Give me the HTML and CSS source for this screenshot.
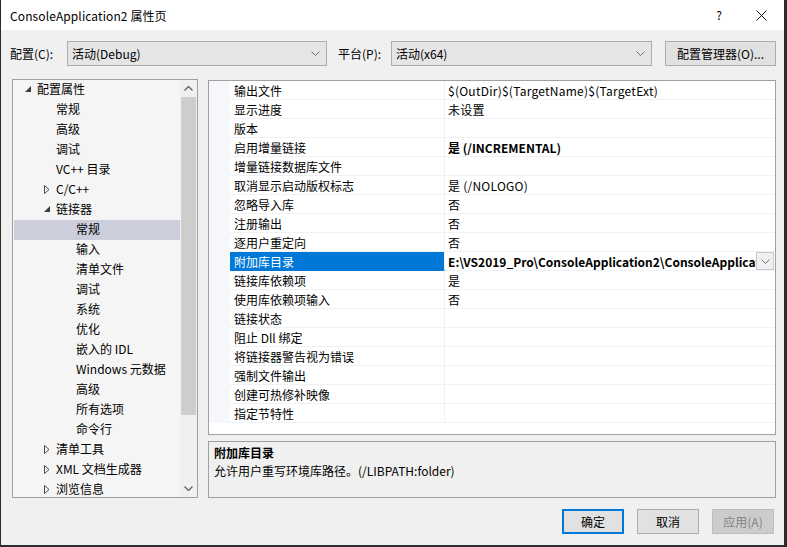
FILE: index.html
```html
<!DOCTYPE html>
<html lang="zh-CN">
<head>
<meta charset="utf-8">
<title>ConsoleApplication2 属性页</title>
<link rel="stylesheet" href="styles.css">
</head>
<body>
<div class="window">
  <div class="titlebar">
    <span class="title">ConsoleApplication2 属性页</span>
    <span class="help">?</span>
    <span class="close"><svg width="11" height="11" viewBox="0 0 11 11"><path d="M0.5 0.5L10.5 10.5M10.5 0.5L0.5 10.5" stroke="#111" stroke-width="1" fill="none"/></svg></span>
  </div>

  <div class="config">
    <span class="lbl">配置(C):</span>
    <div class="combo combo-cfg"><span>活动(Debug)</span><svg class="chev" width="9" height="5" viewBox="0 0 9 5"><path d="M0.5 0.5L4.5 4.5L8.5 0.5" stroke="#6d6d6d" fill="none"/></svg></div>
    <span class="lbl lbl-plat">平台(P):</span>
    <div class="combo combo-plat"><span>活动(x64)</span><svg class="chev" width="9" height="5" viewBox="0 0 9 5"><path d="M0.5 0.5L4.5 4.5L8.5 0.5" stroke="#6d6d6d" fill="none"/></svg></div>
    <button class="btn btn-mgr">配置管理器(O)...</button>
  </div>

  <div class="main">
    <div class="tree">
      <div class="nodes">
        <div class="node l0"><span class="tw"><svg width="6" height="6" viewBox="0 0 6 6"><polygon points="6,0 6,6 0,6" fill="#3c3c3c"/></svg></span>配置属性</div>
        <div class="node l1"><span class="tw"></span>常规</div>
        <div class="node l1"><span class="tw"></span>高级</div>
        <div class="node l1"><span class="tw"></span>调试</div>
        <div class="node l1"><span class="tw"></span>VC++ 目录</div>
        <div class="node l1"><span class="tw"><svg width="6" height="9" viewBox="0 0 6 9"><polygon points="0.5,0.5 5,4.5 0.5,8.5" fill="none" stroke="#4a4a4a"/></svg></span>C/C++</div>
        <div class="node l1"><span class="tw"><svg width="6" height="6" viewBox="0 0 6 6"><polygon points="6,0 6,6 0,6" fill="#3c3c3c"/></svg></span>链接器</div>
        <div class="node l2 sel"><span class="tw"></span>常规</div>
        <div class="node l2"><span class="tw"></span>输入</div>
        <div class="node l2"><span class="tw"></span>清单文件</div>
        <div class="node l2"><span class="tw"></span>调试</div>
        <div class="node l2"><span class="tw"></span>系统</div>
        <div class="node l2"><span class="tw"></span>优化</div>
        <div class="node l2"><span class="tw"></span>嵌入的 IDL</div>
        <div class="node l2"><span class="tw"></span>Windows 元数据</div>
        <div class="node l2"><span class="tw"></span>高级</div>
        <div class="node l2"><span class="tw"></span>所有选项</div>
        <div class="node l2"><span class="tw"></span>命令行</div>
        <div class="node l1"><span class="tw"><svg width="6" height="9" viewBox="0 0 6 9"><polygon points="0.5,0.5 5,4.5 0.5,8.5" fill="none" stroke="#4a4a4a"/></svg></span>清单工具</div>
        <div class="node l1"><span class="tw"><svg width="6" height="9" viewBox="0 0 6 9"><polygon points="0.5,0.5 5,4.5 0.5,8.5" fill="none" stroke="#4a4a4a"/></svg></span>XML 文档生成器</div>
        <div class="node l1"><span class="tw"><svg width="6" height="9" viewBox="0 0 6 9"><polygon points="0.5,0.5 5,4.5 0.5,8.5" fill="none" stroke="#4a4a4a"/></svg></span>浏览信息</div>
      </div>
      <div class="scrollbar">
        <div class="sb-arrow"><svg width="9" height="5" viewBox="0 0 9 5"><path d="M0.5 4.5L4.5 0.5L8.5 4.5" stroke="#606060" stroke-width="1.3" fill="none"/></svg></div>
        <div class="sb-thumb"></div>
        <div class="sb-track"></div>
        <div class="sb-arrow"><svg width="9" height="5" viewBox="0 0 9 5"><path d="M0.5 0.5L4.5 4.5L8.5 0.5" stroke="#606060" stroke-width="1.3" fill="none"/></svg></div>
      </div>
    </div>

    <div class="right">
      <div class="grid">
        <div class="row"><span class="gut"></span><span class="name">输出文件</span><span class="val">$(OutDir)$(TargetName)$(TargetExt)</span></div>
        <div class="row"><span class="gut"></span><span class="name">显示进度</span><span class="val">未设置</span></div>
        <div class="row"><span class="gut"></span><span class="name">版本</span><span class="val"></span></div>
        <div class="row"><span class="gut"></span><span class="name">启用增量链接</span><span class="val bold">是 (/INCREMENTAL)</span></div>
        <div class="row"><span class="gut"></span><span class="name">增量链接数据库文件</span><span class="val"></span></div>
        <div class="row"><span class="gut"></span><span class="name">取消显示启动版权标志</span><span class="val">是 (/NOLOGO)</span></div>
        <div class="row"><span class="gut"></span><span class="name">忽略导入库</span><span class="val">否</span></div>
        <div class="row"><span class="gut"></span><span class="name">注册输出</span><span class="val">否</span></div>
        <div class="row"><span class="gut"></span><span class="name">逐用户重定向</span><span class="val">否</span></div>
        <div class="row selrow"><span class="gut"></span><span class="name">附加库目录</span><span class="val bold"><span class="valtext">E:\VS2019_Pro\ConsoleApplication2\ConsoleApplication2\lib</span><span class="dd"><svg width="9" height="5" viewBox="0 0 9 5"><path d="M0.5 0.5L4.5 4.5L8.5 0.5" stroke="#6d6d6d" fill="none"/></svg></span></span></div>
        <div class="row"><span class="gut"></span><span class="name">链接库依赖项</span><span class="val">是</span></div>
        <div class="row"><span class="gut"></span><span class="name">使用库依赖项输入</span><span class="val">否</span></div>
        <div class="row"><span class="gut"></span><span class="name">链接状态</span><span class="val"></span></div>
        <div class="row"><span class="gut"></span><span class="name">阻止 Dll 绑定</span><span class="val"></span></div>
        <div class="row"><span class="gut"></span><span class="name">将链接器警告视为错误</span><span class="val"></span></div>
        <div class="row"><span class="gut"></span><span class="name">强制文件输出</span><span class="val"></span></div>
        <div class="row"><span class="gut"></span><span class="name">创建可热修补映像</span><span class="val"></span></div>
        <div class="row"><span class="gut"></span><span class="name">指定节特性</span><span class="val"></span></div>
      </div>
      <div class="desc">
        <div class="desc-title">附加库目录</div>
        <div class="desc-text">允许用户重写环境库路径。(/LIBPATH:folder)</div>
      </div>
    </div>
  </div>

  <div class="buttons">
    <button class="btn btn-ok">确定</button>
    <button class="btn">取消</button>
    <button class="btn btn-dis">应用(A)</button>
  </div>
</div>
</body>
</html>
```

FILE: styles.css
```css
* { box-sizing: border-box; }
html, body { margin: 0; padding: 0; }
body {
  background: #2b2b2b;
  width: 787px;
  height: 547px;
  overflow: hidden;
  font-family: "Noto Sans CJK SC", "Noto Sans", sans-serif;
  font-size: 12px;
  color: #000;
}
.window {
  margin-left: 1px;
  width: 783px;
  height: 545px;
  background: #f0f0f0;
  display: flex;
  flex-direction: column;
}
.titlebar {
  height: 30px;
  background: #fff;
  display: flex;
  align-items: center;
  padding-left: 9px;
  line-height: 16px;
}
.title { flex: 1; padding-top: 1px; letter-spacing: 0.1px; }
.help { width: 12px; margin-right: 31px; font-size: 12px; text-align: center; }
.close { width: 11px; height: 11px; margin-right: 17px; display: flex; }

.config {
  margin-top: 11px;
  height: 25px;
  display: flex;
  align-items: center;
  padding-left: 9px;
}
.lbl { width: 57px; line-height: 16px; }
.lbl-plat { margin-left: 11px; width: 53px; }
.combo {
  height: 25px;
  border: 1px solid #adadad;
  background: #e5e5e5;
  display: flex;
  align-items: center;
  padding-left: 4px;
  padding-right: 6px;
  line-height: 16px;
}
.combo span { flex: 1; }
.combo-cfg { width: 260px; }
.combo-plat { width: 261px; }
.chev { display: block; }
.btn {
  font-family: inherit;
  font-size: 12px;
  color: #000;
  height: 25px;
  border: 1px solid #adadad;
  background: #e1e1e1;
  padding: 0;
  line-height: 16px;
}
.btn-mgr { width: 111px; margin-left: 13px; }

.main {
  margin-top: 13px;
  height: 419px;
  display: flex;
  padding-left: 11px;
}
.tree {
  width: 186px;
  height: 419px;
  border: 1px solid #a0a0a0;
  background: #f5f5f5;
  display: flex;
}
.nodes { flex: 1; overflow: hidden; }
.node {
  height: 20px;
  line-height: 18px;
  padding-bottom: 2px;
  white-space: nowrap;
  display: flex;
  align-items: center;
  margin-left: 1px;
}
.tw { width: 13px; flex: none; display: flex; align-items: center; padding-left: 1px; }
.tw svg { display: block; }
.l0 { padding-left: 10px; }
.l1 { padding-left: 29px; }
.l2 { padding-left: 49px; }
.sel { background: #cccedb; }

.scrollbar {
  width: 17px;
  display: flex;
  flex-direction: column;
  background: #f0f0f0;
}
.sb-arrow { height: 17px; display: flex; align-items: center; justify-content: center; }
.sb-thumb { height: 318px; margin: 0 1px; background: #cdcdcd; }
.sb-track { flex: 1; }

.right {
  margin-left: 10px;
  width: 568px;
  display: flex;
  flex-direction: column;
}
.grid {
  height: 355px;
  margin-top: 1px;
  border: 1px solid #a0a0a0;
  background: #fff;
}
.row {
  display: grid;
  grid-template-columns: 21px 215px 1fr;
  height: 19px;
}
.gut { background: #f5f7fb; }
.name, .val {
  border-bottom: 1px solid #eef1f6;
  line-height: 20px;
  white-space: nowrap;
  overflow: hidden;
}
.name { padding-left: 4px; border-right: 1px solid #eef1f6; }
.val { padding-left: 3px; letter-spacing: 0.25px; }
.bold { font-weight: bold; letter-spacing: 0; }
.selrow .name { background: #0078d7; color: #fff; border-bottom-color: #0078d7; }
.selrow .val { display: flex; padding-right: 1px; }
.valtext { flex: 1; overflow: hidden; white-space: nowrap; }
.dd {
  width: 18px;
  height: 18px;
  border: 1px solid #c9c9c9;
  background: #f0f0f0;
  display: flex;
  align-items: center;
  justify-content: center;
  flex: none;
}

.desc {
  margin-top: 6px;
  height: 57px;
  border: 1px solid #a0a0a0;
  background: #f0f0f0;
  padding: 2px 5px;
  line-height: 18px;
}
.desc-title { font-weight: bold; }

.buttons {
  margin-top: 11px;
  display: flex;
  justify-content: flex-end;
  padding-right: 10px;
  gap: 13px;
}
.buttons .btn { width: 62px; }
.btn-ok { border: 2px solid #0078d7; }
.btn-dis { background: #cccccc; border-color: #bfbfbf; color: #838383; }
```
